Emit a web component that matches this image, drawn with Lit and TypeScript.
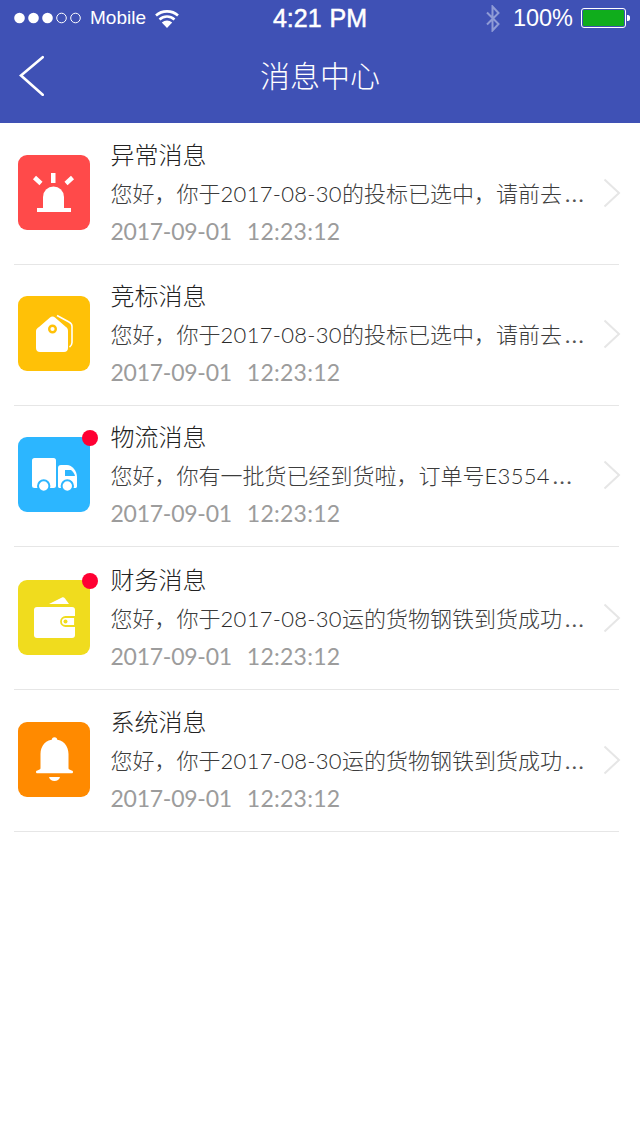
import { LitElement, html, css, svg } from "lit";
import { customElement } from "lit/decorators.js";

const ICONS: Record<string, unknown> = {
  alarm: svg`<path d="M25 53V42a10.500 10.500 0 0 1 21 0v11z" fill="#fff"/><rect x="19" y="53" width="34" height="4" fill="#fff"/><rect x="33" y="18" width="4.500" height="10" fill="#fff"/><path d="M16.500 22.500l6.500 6M54.500 22.500l-6.500 6" stroke="#fff" stroke-width="4.500" fill="none"/>`,
  tag: svg`<path d="M39 19.500l12 6.500c2 1 3 2.500 3 4.500v16c0 2-1 3.500-2.500 4.500" stroke="#fff" stroke-width="1.600" fill="none"/><path d="M21 31l11-9.500c1.500-1.300 3.500-1.300 5 0l11 9.500c1.500 1 2 2 2 4v17c0 2.500-1.500 4-4 4H22c-2.500 0-4-1.500-4-4V35c0-2 1.500-3 3-4z" fill="#fff"/><circle cx="34.500" cy="33" r="3.300" fill="#fff" stroke="#ffc107" stroke-width="2.400"/>`,
  truck: svg`<rect x="14" y="21" width="24" height="30" rx="2.500" fill="#fff"/><path d="M40 31c0-2 1-3 3-3h6c5 0 10 6 10 12v9c0 1.500-.5 2-2 2H42c-1.500 0-2-.500-2-2z" fill="#fff"/><path d="M47 33h6c2 1.500 3.500 3.500 4 6H47z" fill="#2cb6ff"/><circle cx="25.700" cy="49" r="5.700" fill="#fff" stroke="#2cb6ff" stroke-width="2"/><circle cx="49.300" cy="49" r="5.700" fill="#fff" stroke="#2cb6ff" stroke-width="2"/>`,
  wallet: svg`<path d="M31 24l13-6.500c1-.5 2-.2 3 1l4 5.500z" fill="#fff"/><rect x="16" y="27" width="41" height="31" rx="3" fill="#fff"/><path d="M57 37H47.500a4.500 4.500 0 0 0 0 9H57z" fill="#fff" stroke="#f0dc1e" stroke-width="1.800"/><circle cx="47.500" cy="41.500" r="2" fill="#f0dc1e"/>`,
  bell: svg`<circle cx="36.500" cy="18" r="2.700" fill="#fff"/><path d="M36.500 17.500c-8.500 0-14 6-14 14.500v14c0 1-.5 1.500-2 2-1.800.5-2.500 1-2.500 2s.5 1.300 1.500 1.300h34c1 0 1.500-.3 1.500-1.300s-.7-1.500-2.500-2c-1.500-.5-2-1-2-2V32c0-8.500-5.500-14.500-14-14.500z" fill="#fff"/><path d="M31 55h11c-.5 2.500-3 4-5.500 4s-5-1.500-5.500-4z" fill="#fff"/>`,
};

const ROWS = [
  { h: 142, top: 32, title: "异常消息", body: ["您好，你于", "2017-08-30", "的投标已选中，请前去"], color: "#ff4a4a", icon: "alarm", dot: false },
  { h: 141, top: 31, title: "竞标消息", body: ["您好，你于", "2017-08-30", "的投标已选中，请前去"], color: "#ffc107", icon: "tag", dot: false },
  { h: 141, top: 31, title: "物流消息", body: ["您好，你有一批货已经到货啦，订单号", "E3554", ""], color: "#2cb6ff", icon: "truck", dot: true },
  { h: 143, top: 33, title: "财务消息", body: ["您好，你于", "2017-08-30", "运的货物钢铁到货成功"], color: "#f0dc1e", icon: "wallet", dot: true },
  { h: 142, top: 32, title: "系统消息", body: ["您好，你于", "2017-08-30", "运的货物钢铁到货成功"], color: "#ff8a00", icon: "bell", dot: false },
];

@customElement("app-root")
export class AppRoot extends LitElement {
  static styles = css`
    :host { display: block; width: 640px; height: 1136px; background: #fff; overflow: hidden; font-family: Lato, "Noto Sans CJK SC", sans-serif; }
    .head { height: 123px; background: #3f51b5; color: #fff; display: flex; flex-direction: column; }
    .status { height: 36px; display: grid; grid-template-columns: 1fr auto 1fr; align-items: center; font-family: "Liberation Sans", sans-serif; }
    .left { display: flex; align-items: center; padding-left: 14px; font-size: 19px; }
    .dots { display: block; margin-right: 9px; }
    .wifi { display: block; margin-left: 9px; }
    .clock { font-size: 25px; font-weight: 400; -webkit-text-stroke: .5px #fff; word-spacing: 1px; }
    .right { display: flex; align-items: center; justify-content: flex-end; padding-right: 10px; font-size: 23.500px; }
    .bt { display: block; margin-right: 11.500px; }
    .pct { margin-right: 8px; }
    .bat { display: block; }
    .nav { flex: 1; display: grid; grid-template-columns: 1fr auto 1fr; align-items: center; padding-bottom: 12px; }
    .back { display: block; margin-left: 19px; }
    .title { font-family: "Noto Sans CJK SC", sans-serif; font-size: 30px; font-weight: 300; line-height: 40px; }
    .row { display: flex; align-items: flex-start; box-sizing: border-box; margin: 0 21px 0 14px; padding-left: 4px; border-bottom: 1px solid #e6e6e6; }
    .ico { position: relative; width: 72px; height: 75px; flex: none; border-radius: 9px; }
    .ico svg { display: block; }
    .dot { position: absolute; right: -8px; top: -7px; width: 16px; height: 16px; border-radius: 50%; background: #ff0033; }
    .txt { flex: none; width: 473px; margin-left: 20.500px; margin-top: -20px; }
    .t { font-size: 24px; line-height: 40px; color: #222; font-weight: 300; }
    .b { font-size: 22px; line-height: 38px; color: #3c3c3c; white-space: nowrap; font-weight: 300; }
    .l { letter-spacing: .3px; color: #2a2a2a; }
    .e { letter-spacing: 1.600px; margin-left: 3px; font-weight: 400; color: #555; }
    .d { display: flex; gap: 15px; font-size: 23px; line-height: 36px; color: #9c9c9c; }
    .d1 { letter-spacing: -.25px; }
    .d2 { letter-spacing: .25px; }
    .chev { display: block; flex: none; margin: 23px 0 0 19.500px; }
  `;

  render() {
    return html`
      <div class="head">
        <div class="status">
          <div class="left">
            <svg class="dots" width="67" height="12" viewBox="0 0 67 12">
              <circle cx="5.500" cy="6" r="5.300" fill="#fff"/><circle cx="19.500" cy="6" r="5.300" fill="#fff"/><circle cx="33.500" cy="6" r="5.300" fill="#fff"/>
              <circle cx="47.500" cy="6" r="4.800" fill="none" stroke="#fff"/><circle cx="61.500" cy="6" r="4.800" fill="none" stroke="#fff"/>
            </svg>
            <span>Mobile</span>
            <svg class="wifi" width="24" height="19" viewBox="0 0 24 19">
              <path d="M1 6.500C7 1 17 1 23 6.500M4.500 10.500C9 6.500 15 6.500 19.500 10.500" fill="none" stroke="#fff" stroke-width="2.600"/>
              <path d="M12 19L6.800 13.500C10 10.800 14 10.800 17.200 13.500z" fill="#fff"/>
            </svg>
          </div>
          <div class="clock">4:21 PM</div>
          <div class="right">
            <svg class="bt" width="16" height="27" viewBox="0 0 16 27"><path d="M2 7.500l11.500 11.500L7.500 25.500V1.500l6 6.500L2 19.500" fill="none" stroke="#8f9bd6" stroke-width="2"/></svg>
            <span class="pct">100%</span>
            <svg class="bat" width="49" height="20" viewBox="0 0 49 20">
              <rect x=".5" y=".5" width="44" height="19" rx="2.500" fill="none" stroke="#fff"/>
              <rect x="2" y="2" width="41" height="16" rx="1" fill="#10ad1c"/>
              <path d="M46 7h1c1 0 2 1 2 2v2c0 1-1 2-2 2h-1z" fill="#fff"/>
            </svg>
          </div>
        </div>
        <div class="nav">
          <svg class="back" width="26" height="44" viewBox="0 0 26 44"><path d="M23.700 5.200L2 23.500l21.700 19.300" fill="none" stroke="#fff" stroke-width="2.600" stroke-linecap="round"/></svg>
          <div class="title">消息中心</div>
          <div></div>
        </div>
      </div>
      ${ROWS.map((r) => html`
        <div class="row" style="height:${r.h}px;padding-top:${r.top}px">
          <div class="ico" style="background:${r.color}">
            <svg width="72" height="75" viewBox="0 0 72 75">${ICONS[r.icon]}</svg>
            ${r.dot ? html`<div class="dot"></div>` : ""}
          </div>
          <div class="txt">
            <div class="t">${r.title}</div>
            <div class="b">${r.body[0]}<span class="l">${r.body[1]}</span>${r.body[2]}<span class="e">...</span></div>
            <div class="d"><span class="d1">2017-09-01</span><span class="d2">12:23:12</span></div>
          </div>
          <svg class="chev" width="18" height="30" viewBox="0 0 18 30"><path d="M1.500 1.500L16 15 1.500 28.500" fill="none" stroke="#e6e6e6" stroke-width="2"/></svg>
        </div>`)}
    `;
  }
}
